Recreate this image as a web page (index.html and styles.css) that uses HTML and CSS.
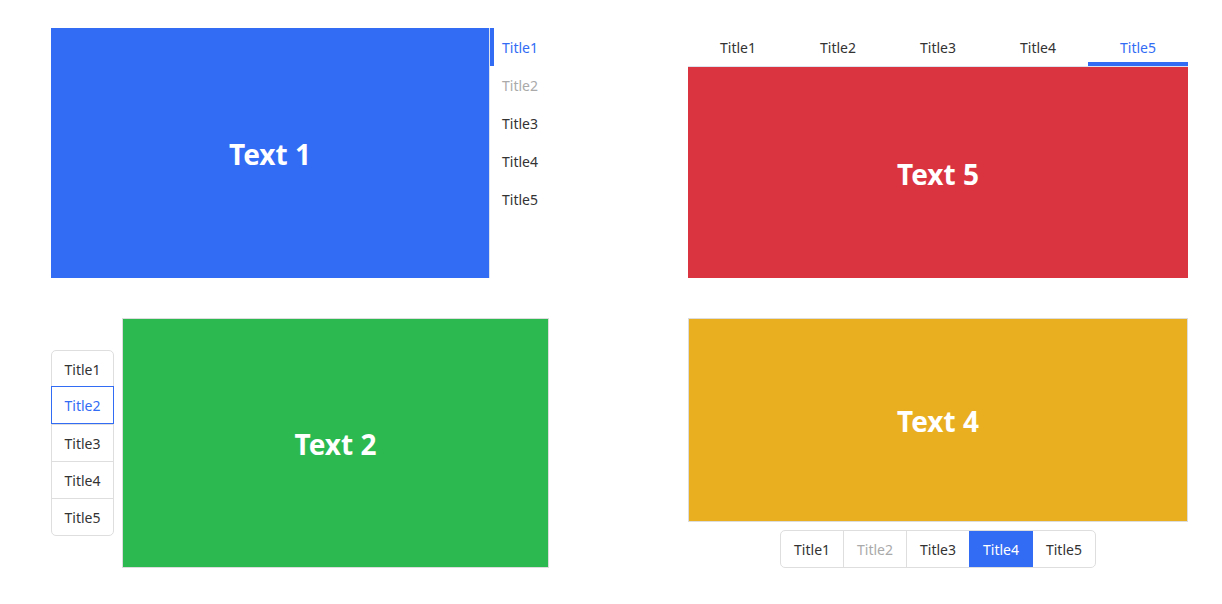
FILE: index.html
```html
<!DOCTYPE html>
<html>
<head>
<meta charset="utf-8">
<link rel="stylesheet" href="styles.css">
</head>
<body>
<div class="grid">
  <section class="panel p-right">
    <div class="pane blue">Text 1</div>
    <ul class="vtabs">
      <li class="active">Title1</li>
      <li class="disabled">Title2</li>
      <li>Title3</li>
      <li>Title4</li>
      <li>Title5</li>
    </ul>
  </section>
  <section class="panel p-top">
    <ul class="htabs">
      <li>Title1</li>
      <li>Title2</li>
      <li>Title3</li>
      <li>Title4</li>
      <li class="active">Title5</li>
    </ul>
    <div class="pane red">Text 5</div>
  </section>
  <section class="panel p-left">
    <ul class="pills">
      <li>Title1</li>
      <li class="active">Title2</li>
      <li>Title3</li>
      <li>Title4</li>
      <li>Title5</li>
    </ul>
    <div class="pane green bordered">Text 2</div>
  </section>
  <section class="panel p-bottom">
    <div class="pane yellow bordered">Text 4</div>
    <ul class="seg">
      <li>Title1</li>
      <li class="disabled">Title2</li>
      <li>Title3</li>
      <li class="active">Title4</li>
      <li>Title5</li>
    </ul>
  </section>
</div>
</body>
</html>
```
FILE: styles.css
```css
* { box-sizing: border-box; }
html, body { margin: 0; padding: 0; background: #fff; }
body {
  font-family: "Noto Sans", "Open Sans", sans-serif;
  font-size: 14px;
  color: #333;
}
ul { list-style: none; margin: 0; padding: 0; }
.grid {
  display: grid;
  grid-template-columns: 498px 500px;
  grid-template-rows: 250px 250px;
  column-gap: 139px;
  row-gap: 40px;
  padding: 28px 0 0 51px;
}
.panel { display: flex; min-width: 0; }
.pane {
  display: flex;
  align-items: center;
  justify-content: center;
  color: #fff;
  font-weight: 700;
  font-size: 28px;
  padding-top: 2px;
}
.blue { background: #336cf4; }
.red { background: #db3441; }
.green { background: #2cb94f; }
.yellow { background: #e9af21; }
.bordered { border: 1px solid #dcdcdc; }

/* panel 1: tabs on right */
.p-right .pane { width: 438px; height: 250px; flex: none; }
.vtabs {
  flex: 1;
  border-left: 1px solid #dde3ee;
  display: flex;
  flex-direction: column;
}
.vtabs li {
  height: 38px;
  line-height: 36px;
  padding: 2px 0 0 12px;
  position: relative;
}
.vtabs li.active { color: #336cf4; }
.vtabs li.active::before {
  content: "";
  position: absolute;
  left: 0; top: 0; bottom: 0;
  width: 4px;
  background: #336cf4;
}
.disabled { color: #aaa; }

/* panel 5: tabs on top */
.p-top { flex-direction: column; }
.htabs {
  display: flex;
  height: 39px;
  border-bottom: 1px solid #dde3ee;
}
.htabs li {
  width: 100px;
  text-align: center;
  line-height: 36px;
  padding-top: 2px;
  height: 38px;
  position: relative;
}
.htabs li.active { color: #336cf4; }
.htabs li.active::after {
  content: "";
  position: absolute;
  left: 0; right: 0; bottom: 0;
  height: 4px;
  background: #336cf4;
}
.p-top .pane { flex: 1; }

/* panel 2: pills on left */
.p-left { align-items: center; gap: 8px; }
.pills {
  width: 63px;
  border: 1px solid #dedede;
  border-radius: 5px;
  flex: none;
}
.pills li {
  height: 37px;
  line-height: 35px;
  padding-top: 1px;
  text-align: center;
  border-top: 1px solid #dedede;
}
.pills li:first-child { border-top: none; height: 36px; }
.pills li.active {
  color: #336cf4;
  border: 1px solid #336cf4;
  margin: -1px -1px 0;
  height: 38px;
}
.p-left .pane { flex: 1; height: 250px; }

/* panel 4: segmented on bottom */
.p-bottom { flex-direction: column; align-items: center; gap: 8px; }
.p-bottom .pane { width: 500px; height: 204px; }
.seg {
  display: flex;
  border: 1px solid #dedede;
  border-radius: 5px;
  height: 38px;
  overflow: hidden;
}
.seg li {
  line-height: 34px;
  padding: 2px 13px 0;
  border-left: 1px solid #dedede;
}
.seg li:first-child { border-left: none; }
.seg li.active {
  background: #336cf4;
  color: #fff;
  border-left-color: #336cf4;
}
.seg li.active + li { border-left-color: #336cf4; }
```
